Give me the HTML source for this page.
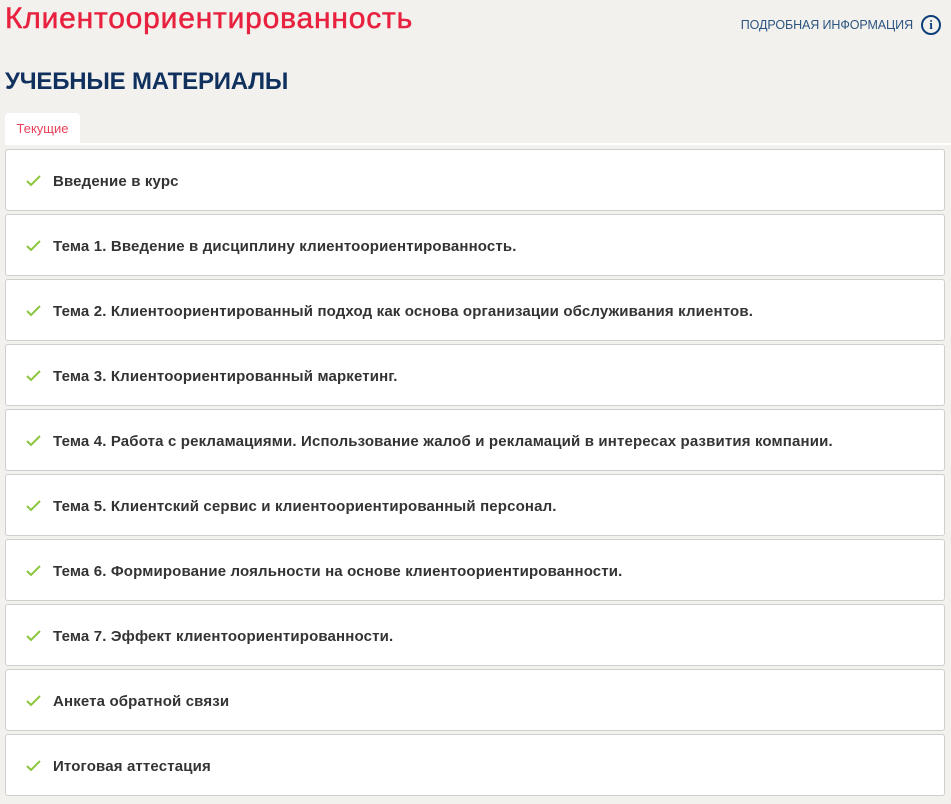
<!DOCTYPE html>
<html><head><meta charset="utf-8"><style>
body{margin:0;background:#f2f1ee;font-family:"Liberation Sans",sans-serif;width:951px;height:804px;overflow:hidden;position:relative}
h1{position:absolute;left:5px;top:2px;margin:0;font-size:30px;font-weight:normal;color:#e8213f;letter-spacing:0.8px;-webkit-text-stroke:0.5px #e8213f}
.info{position:absolute;right:10px;top:15px;font-size:12.5px;color:#2d5580;display:flex;align-items:center;letter-spacing:-0.1px}
.info .i{width:16px;height:16px;border:2px solid #0f3f7a;border-radius:50%;margin-left:8px;display:flex;align-items:center;justify-content:center;font-weight:bold;font-size:13px;color:#0f3f7a;font-family:"Liberation Serif",serif}
h2{position:absolute;left:5px;top:68px;margin:0;font-size:24px;font-weight:bold;color:#10305e;letter-spacing:-0.2px}
.tab{position:absolute;left:5px;top:113px;width:75px;height:31px;background:#fff;border-radius:4px 4px 0 0;font-size:13px;color:#e8405a;text-align:center;line-height:31px}
.line{position:absolute;left:5px;right:0;top:143px;height:2px;background:#fff}
.card{position:absolute;left:5px;width:940px;background:#fff;border:1px solid #cfcfcf;border-radius:3px;display:flex;align-items:center;font-size:15px;font-weight:bold;color:#333;letter-spacing:0.15px;padding-top:2px;box-sizing:border-box;height:62px}
.card svg{margin-left:20px;margin-right:12px}
</style></head><body>
<h1>Клиентоориентированность</h1>
<div class="info">ПОДРОБНАЯ ИНФОРМАЦИЯ<span class="i">i</span></div>
<h2>УЧЕБНЫЕ МАТЕРИАЛЫ</h2>
<div class="tab">Текущие</div>
<div class="line"></div>
<div class="card" style="top:149px"><svg width="15" height="12" viewBox="0 0 15 12"><path d="M1 6l4 4 9-9" stroke="#8cc63f" stroke-width="2" fill="none"/></svg>Введение в курс</div>
<div class="card" style="top:214px"><svg width="15" height="12" viewBox="0 0 15 12"><path d="M1 6l4 4 9-9" stroke="#8cc63f" stroke-width="2" fill="none"/></svg>Тема 1. Введение в дисциплину клиентоориентированность.</div>
<div class="card" style="top:279px"><svg width="15" height="12" viewBox="0 0 15 12"><path d="M1 6l4 4 9-9" stroke="#8cc63f" stroke-width="2" fill="none"/></svg>Тема 2. Клиентоориентированный подход как основа организации обслуживания клиентов.</div>
<div class="card" style="top:344px"><svg width="15" height="12" viewBox="0 0 15 12"><path d="M1 6l4 4 9-9" stroke="#8cc63f" stroke-width="2" fill="none"/></svg>Тема 3. Клиентоориентированный маркетинг.</div>
<div class="card" style="top:409px"><svg width="15" height="12" viewBox="0 0 15 12"><path d="M1 6l4 4 9-9" stroke="#8cc63f" stroke-width="2" fill="none"/></svg>Тема 4. Работа с рекламациями. Использование жалоб и рекламаций в интересах развития компании.</div>
<div class="card" style="top:474px"><svg width="15" height="12" viewBox="0 0 15 12"><path d="M1 6l4 4 9-9" stroke="#8cc63f" stroke-width="2" fill="none"/></svg>Тема 5. Клиентский сервис и клиентоориентированный персонал.</div>
<div class="card" style="top:539px"><svg width="15" height="12" viewBox="0 0 15 12"><path d="M1 6l4 4 9-9" stroke="#8cc63f" stroke-width="2" fill="none"/></svg>Тема 6. Формирование лояльности на основе клиентоориентированности.</div>
<div class="card" style="top:604px"><svg width="15" height="12" viewBox="0 0 15 12"><path d="M1 6l4 4 9-9" stroke="#8cc63f" stroke-width="2" fill="none"/></svg>Тема 7. Эффект клиентоориентированности.</div>
<div class="card" style="top:669px"><svg width="15" height="12" viewBox="0 0 15 12"><path d="M1 6l4 4 9-9" stroke="#8cc63f" stroke-width="2" fill="none"/></svg>Анкета обратной связи</div>
<div class="card" style="top:734px"><svg width="15" height="12" viewBox="0 0 15 12"><path d="M1 6l4 4 9-9" stroke="#8cc63f" stroke-width="2" fill="none"/></svg>Итоговая аттестация</div>
</body></html>
